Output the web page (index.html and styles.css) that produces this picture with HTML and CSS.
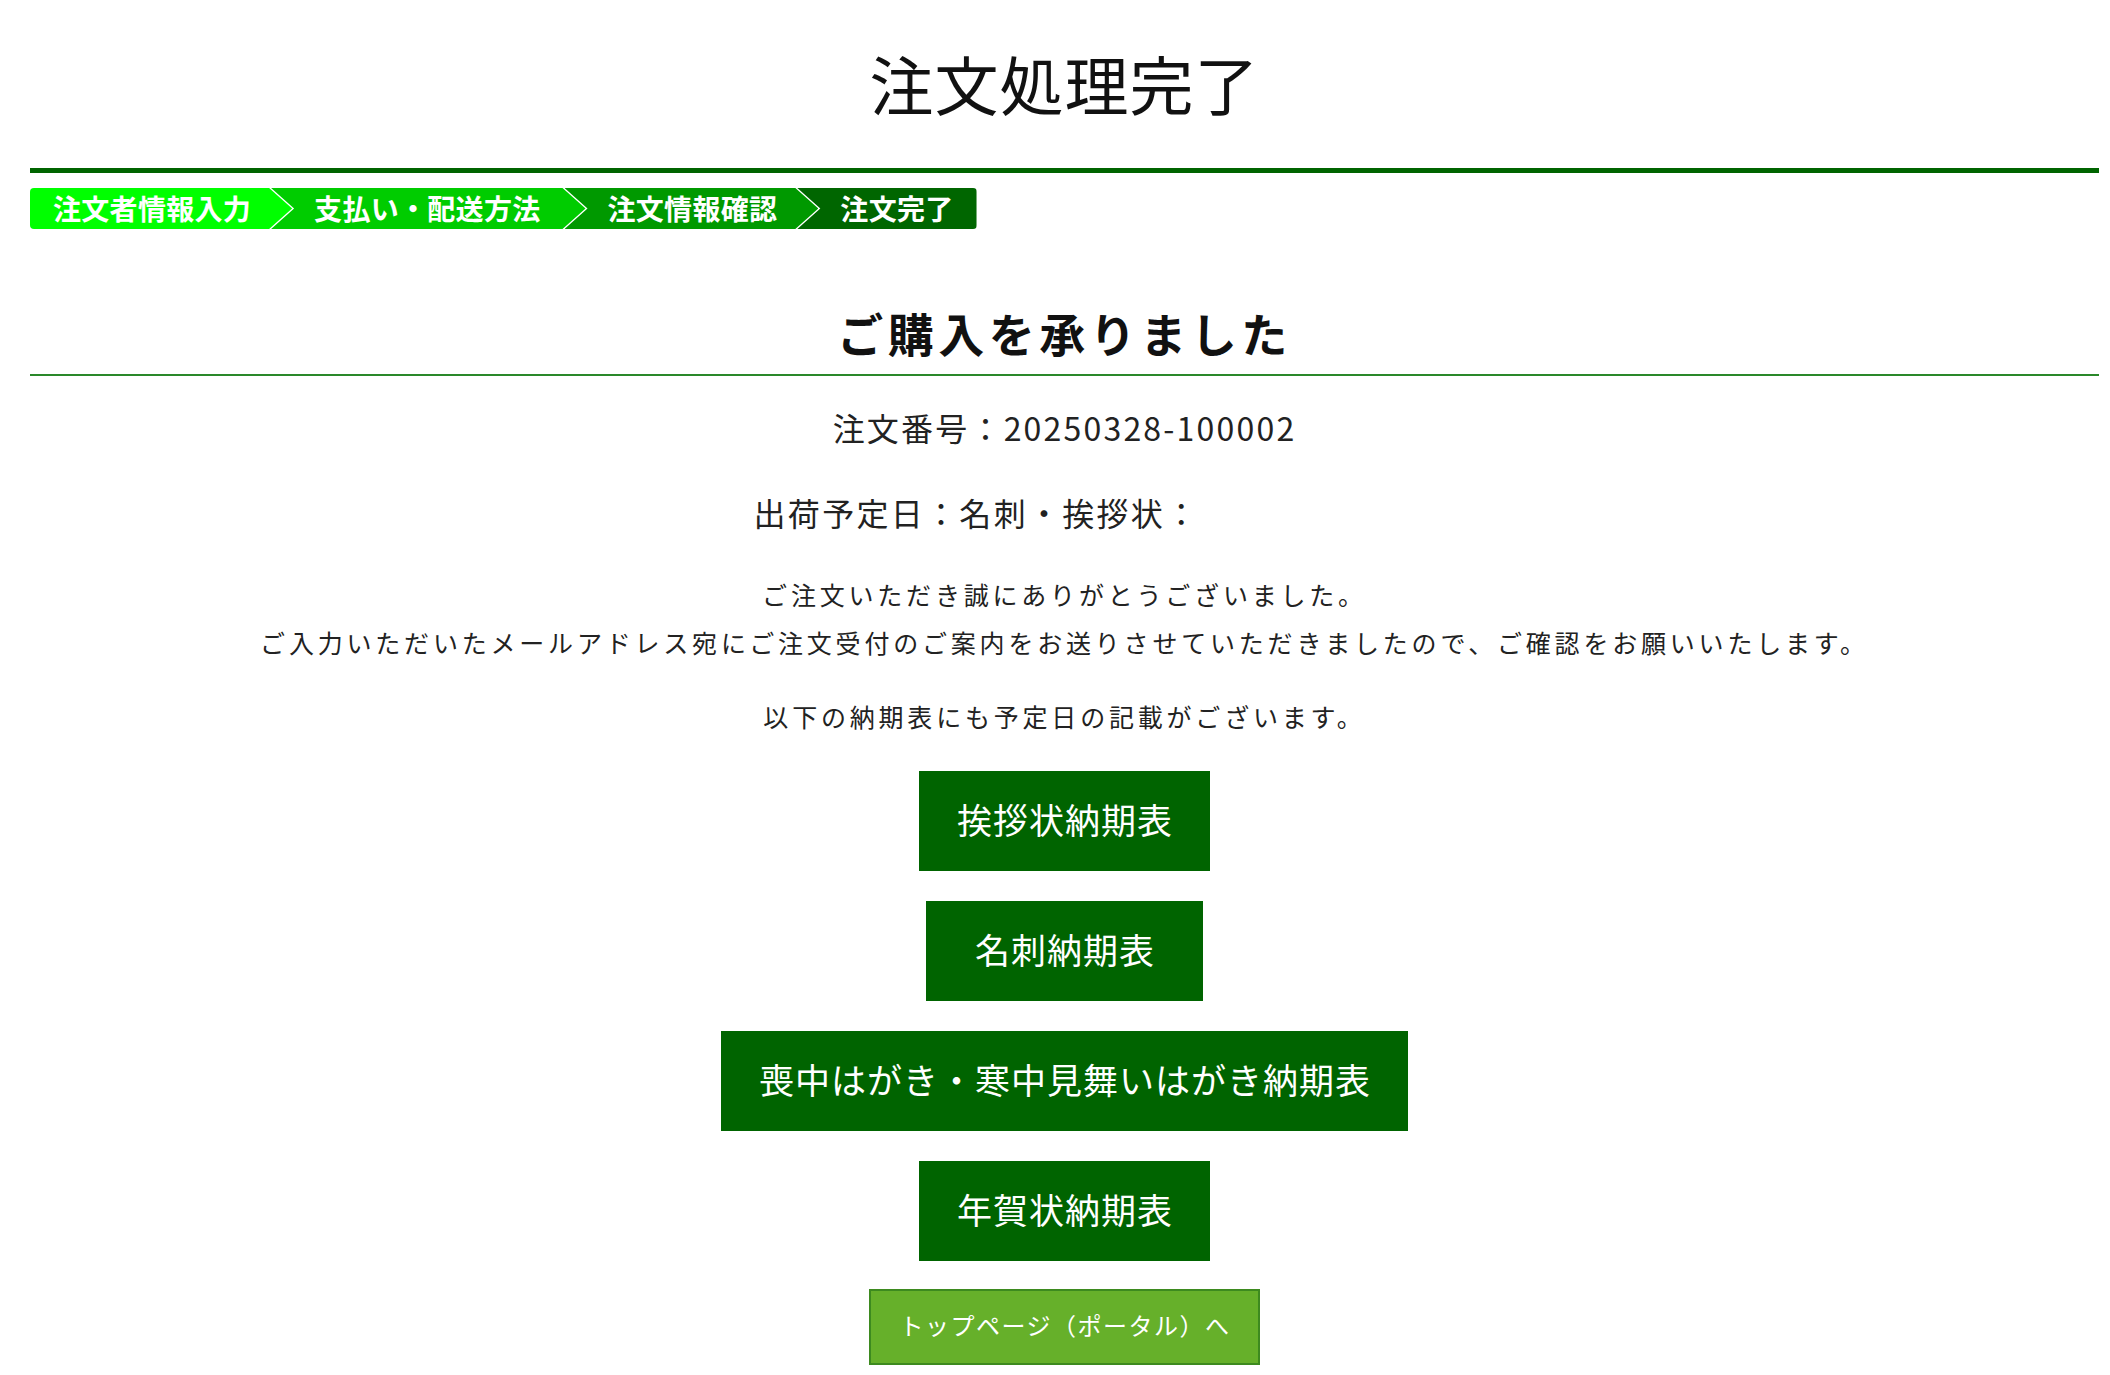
FILE: index.html
```html
<!DOCTYPE html>
<html lang="ja">
<head>
<meta charset="utf-8">
<title>注文処理完了</title>
<link rel="stylesheet" href="styles.css">
</head>
<body>
<div class="page">
  <h1 class="title">注文処理完了</h1>
  <div class="rule-thick"></div>
  <ol class="steps">
    <li class="step step-1">注文者情報入力</li>
    <li class="step step-2">支払い・配送方法</li>
    <li class="step step-3">注文情報確認</li>
    <li class="step step-4">注文完了</li>
  </ol>
  <h2 class="heading">ご購入を承りました</h2>
  <p class="order-no">注文番号：20250328-100002</p>
  <p class="ship">出荷予定日：名刺・挨拶状：<span class="ship-blank"></span></p>
  <p class="message">ご注文いただき誠にありがとうございました。<br>ご入力いただいたメールアドレス宛にご注文受付のご案内をお送りさせていただきましたので、ご確認をお願いいたします。</p>
  <p class="message message-note">以下の納期表にも予定日の記載がございます。</p>
  <div class="buttons">
    <a class="btn-schedule" href="#">挨拶状納期表</a>
    <a class="btn-schedule" href="#">名刺納期表</a>
    <a class="btn-schedule" href="#">喪中はがき・寒中見舞いはがき納期表</a>
    <a class="btn-schedule" href="#">年賀状納期表</a>
    <a class="btn-top" href="#">トップページ（ポータル）へ</a>
  </div>
</div>
</body>
</html>
```

FILE: styles.css
```css
html, body {
  margin: 0;
  padding: 0;
  background: #ffffff;
}

body {
  font-family: "Noto Sans CJK JP", "Noto Sans", sans-serif;
  color: #222222;
}

.page {
  padding: 42px 11px 40px 30px;
}

.title {
  margin: 0;
  font-size: 64px;
  line-height: 80px;
  font-weight: 400;
  letter-spacing: 1px;
  text-align: center;
  color: #111111;
}

.rule-thick {
  margin-top: 46px;
  height: 5px;
  background: #006400;
}

.steps {
  list-style: none;
  margin: 15px 0 0 0;
  padding: 0;
  display: flex;
}

.step {
  height: 41px;
  line-height: 41px;
  font-size: 28px;
  font-weight: 700;
  letter-spacing: 0.3px;
  color: #ffffff;
  padding: 0 41px 0 43px;
  margin-left: -21px;
  white-space: nowrap;
  clip-path: polygon(0 0, calc(100% - 23px) 0, 100% 50%, calc(100% - 23px) 100%, 0 100%, 23px 50%);
}

.step-1 {
  background: #00ff00;
  margin-left: 0;
  padding-left: 23px;
  border-radius: 4px 0 0 4px;
  clip-path: polygon(0 0, calc(100% - 23px) 0, 100% 50%, calc(100% - 23px) 100%, 0 100%);
}

.step-2 {
  background: #00cc00;
  padding-right: 45px;
}

.step-3 {
  background: #009900;
}

.step-4 {
  background: #006600;
  padding-right: 23px;
  border-radius: 0 4px 4px 0;
  clip-path: polygon(0 0, 100% 0, 100% 100%, 0 100%, 23px 50%);
}

.heading {
  margin: 73px 0 0 0;
  font-size: 46px;
  line-height: 60px;
  font-weight: 700;
  letter-spacing: 4.5px;
  text-align: center;
  color: #111111;
  padding-bottom: 12px;
  border-bottom: 2px solid #2a882a;
}

.order-no {
  margin: 29px 0 0 0;
  font-size: 32px;
  line-height: 44px;
  letter-spacing: 2.2px;
  text-align: center;
}

.ship {
  margin: 41px 0 0 0;
  font-size: 32px;
  line-height: 44px;
  letter-spacing: 2.3px;
  text-align: center;
}

.ship-blank {
  display: inline-block;
  width: 176px;
}

.message {
  margin: 36px 0 0 0;
  font-size: 25px;
  line-height: 48px;
  letter-spacing: 3.8px;
  text-align: center;
}

.message-note {
  margin-top: 26px;
}

.buttons {
  margin-top: 31px;
  display: flex;
  flex-direction: column;
  align-items: center;
  gap: 30px;
}

.btn-schedule {
  display: block;
  box-sizing: border-box;
  min-width: 277px;
  height: 100px;
  line-height: 96px;
  padding: 0 37px 4px 38px;
  background: #006400;
  color: #ffffff;
  font-size: 35px;
  letter-spacing: 1px;
  text-align: center;
  text-decoration: none;
  white-space: nowrap;
}

.btn-top {
  display: block;
  margin-top: -2px;
  height: 70px;
  line-height: 68px;
  padding: 0 27px 2px 28px;
  background: #66b02a;
  border: 2px solid #3d8a1f;
  color: #ffffff;
  font-size: 24px;
  letter-spacing: 1.5px;
  text-decoration: none;
  white-space: nowrap;
}
```
